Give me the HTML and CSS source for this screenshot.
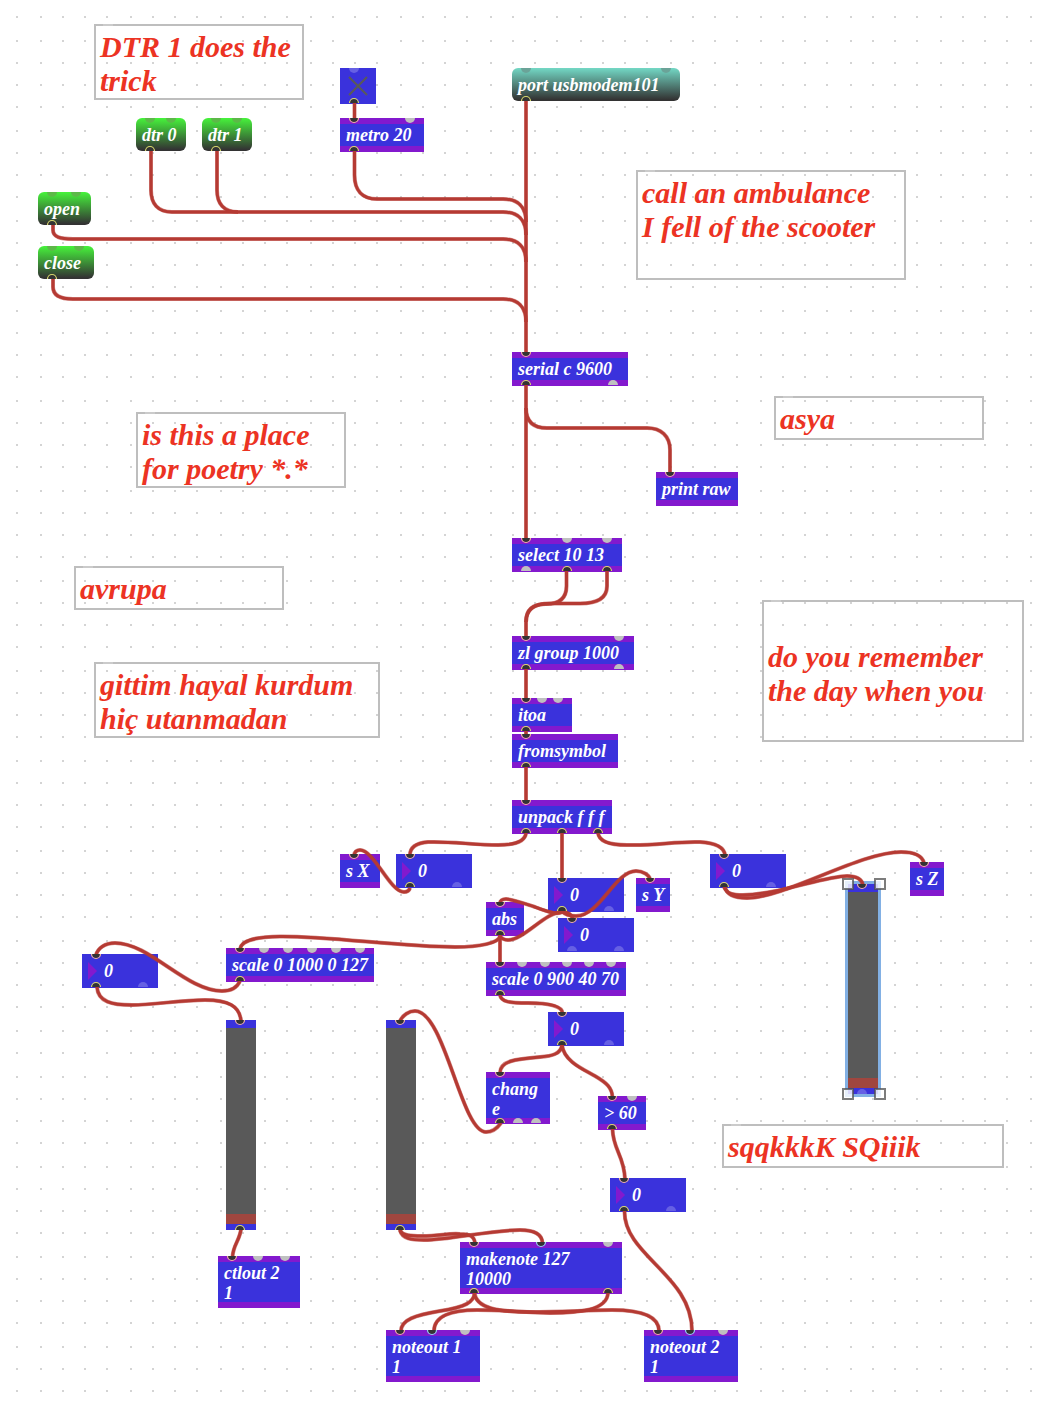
FILE: index.html
```html
<!DOCTYPE html>
<html lang="en">
<head>
<meta charset="utf-8">
<meta name="viewport" content="width=device-width, initial-scale=1">
<title>Serial to MIDI patcher</title>
<link rel="stylesheet" href="styles.css">
</head>
<body>
<main class="patcher">
  <svg class="layer" aria-hidden="true">
    <defs>
      <pattern id="dots" width="90" height="90" patternUnits="userSpaceOnUse" x="16" y="16">
        <path class="dot" d="M0 1h2M24 1h2M46 1h2M68 1h2M0 25h2M24 25h2M46 25h2M68 25h2M0 47h2M24 47h2M46 47h2M68 47h2M0 69h2M24 69h2M46 69h2M68 69h2"/>
      </pattern>
      <pattern id="dots-lower" width="90" height="90" patternUnits="userSpaceOnUse" x="16" y="1052">
        <path class="dot" d="M0 1h2M24 1h2M46 1h2M68 1h2M0 25h2M24 25h2M46 25h2M68 25h2M0 47h2M24 47h2M46 47h2M68 47h2M0 69h2M24 69h2M46 69h2M68 69h2"/>
      </pattern>
    </defs>
    <rect width="100%" height="1050" fill="url(#dots)"/>
    <rect y="1050" width="100%" height="100%" fill="url(#dots-lower)"/>
  </svg>

  <p class="comment at-dtr-note">DTR 1 does the<br>trick</p>
  <p class="comment at-ambulance">call an ambulance<br>I fell of the scooter</p>
  <p class="comment at-asya">asya</p>
  <p class="comment at-poetry">is this a place<br>for poetry *.*</p>
  <p class="comment at-avrupa">avrupa</p>
  <p class="comment at-gittim">gittim hayal kurdum<br>hiç utanmadan</p>
  <p class="comment at-remember"><br>do you remember<br>the day when you</p>
  <p class="comment at-sqq">sqqkkkK SQiiik</p>

  <button class="message at-dtr0" type="button">dtr 0</button>
  <button class="message at-dtr1" type="button">dtr 1</button>
  <button class="message at-open" type="button">open</button>
  <button class="message at-close" type="button">close</button>
  <button class="message port-message at-port" type="button">port usbmodem101</button>

  <input class="toggle at-toggle" type="checkbox" aria-label="Metro on">

  <div class="object at-metro">metro 20</div>
  <div class="object at-serial">serial c 9600</div>
  <div class="object at-print">print raw</div>
  <div class="object at-select">select 10 13</div>
  <div class="object at-zl">zl group 1000</div>
  <div class="object at-itoa">itoa</div>
  <div class="object at-fromsymbol">fromsymbol</div>
  <div class="object at-unpack">unpack f f f</div>
  <div class="object at-send-x">s X</div>
  <div class="object at-send-y">s Y</div>
  <div class="object at-send-z">s Z</div>
  <div class="object at-abs">abs</div>
  <div class="object at-scale-127">scale 0 1000 0 127</div>
  <div class="object at-scale-70">scale 0 900 40 70</div>
  <div class="object at-change">chang<br>e</div>
  <div class="object at-greater">&gt; 60</div>
  <div class="object at-makenote">makenote 127<br>10000</div>
  <div class="object at-noteout1">noteout 1<br>1</div>
  <div class="object at-noteout2">noteout 2<br>1</div>
  <div class="object at-ctlout">ctlout 2<br>1</div>

  <label class="number at-num-x"><input type="number" value="0" aria-label="X value"></label>
  <label class="number at-num-y"><input type="number" value="0" aria-label="Y value"></label>
  <label class="number at-num-abs"><input type="number" value="0" aria-label="Absolute Y"></label>
  <label class="number at-num-z"><input type="number" value="0" aria-label="Z value"></label>
  <label class="number at-num-ctl"><input type="number" value="0" aria-label="Controller value"></label>
  <label class="number at-num-note"><input type="number" value="0" aria-label="Note value"></label>
  <label class="number at-num-gate"><input type="number" value="0" aria-label="Gate value"></label>

  <input class="slider at-slider-ctl" type="range" min="0" max="127" value="0" aria-label="Controller">
  <input class="slider at-slider-note" type="range" min="0" max="127" value="0" aria-label="Note">
  <input class="slider selected at-slider-z" type="range" min="0" max="127" value="0" aria-label="Z level">

  <svg class="layer" aria-hidden="true">
    <defs>
      <path id="in" d="M-5 0A5 5 0 0 0 5 0Z"/>
      <path id="out" d="M-5 0A5 5 0 0 1 5 0Z"/>
      <g id="in-on"><path fill="#333" stroke="none" d="M-4 0A4 4 0 0 0 4 0Z"/><path fill="none" stroke-width="1.2" d="M-4.5 0A4.5 4.5 0 0 0 4.5 0"/></g>
      <g id="out-on"><path fill="#333" stroke="none" d="M-4 0A4 4 0 0 1 4 0Z"/><path fill="none" stroke-width="1.2" d="M-4.5 0A4.5 4.5 0 0 1 4.5 0"/></g>
      <g id="cords">
        <path d="M526 100V353"/>
        <path d="M354.5 103V120"/>
        <path d="M354.5 151V175C354.5 190 362 199 377 199H503C518 199 526 207 526 222"/>
        <path d="M151 151V190C151 204 158 212 172 212H503C518 212 526 220 526 235"/>
        <path d="M217 151V190C217 204 224 212 238 212"/>
        <path d="M53 225V230C53 237 60 239 73 239H503C518 239 526 247 526 262"/>
        <path d="M53 279V287C53 295 60 299 73 299H503C518 299 526 307 526 322"/>
        <path d="M526 385V539"/>
        <path d="M526 408C526 422 534 428 547 428H647C661 428 670 436 670 450V473"/>
        <path d="M566.5 571V586C566.5 598 560 604 546 604C534 604 526 609 526 622V637"/>
        <path d="M607 571V586C607 598 598 603.500 580 603.500H550C534 603.500 526 609 526 622"/>
        <path d="M526 669V699M526 731V735M526 767V801M562 833V879M500 935V963"/>
        <path d="M526 833C525 843 512 845 498 845C474 845 450 841 428 842C416 843 410 847 410 855"/>
        <path d="M598 833C599 842 610 845 627 845C655 846 676 841 700 842C716 843 724 847 725 855"/>
        <path d="M410 888C409 891 407 892 404 892C390 892 374 850 360 850C357 850 355 851 354 855"/>
        <path d="M562 911C560 916 548 912 535 907C520 902 512 899 506 899C502 899 500 901 500 903"/>
        <path d="M562 911C565 915 570 916 576 916C600 916 615 871 636 871C643 871 649 875 650 879"/>
        <path d="M500 936C502 939 505 940 508 940C524 940 545 912 562 912C568 912 572 915 573 919"/>
        <path d="M500 936C499 943 480 947 455 947C400 947 330 936 280 936.500C256 937 241 940 240 949"/>
        <path d="M240 981C237 988 230 991 222 991C186 991 150 943 115 943C105 943 98 948 96 955"/>
        <path d="M97 987C98 1002 112 1005 132 1005C154 1005 180 1000 205 1000C228 1000 240 1006 241 1021"/>
        <path d="M500 995C501 1002 510 1003 528 1003C548 1003 562 1006 562.5 1013"/>
        <path d="M562 1045C561 1054 552 1056 540 1057C515 1059 500 1061 500 1073"/>
        <path d="M562 1045C564 1062 585 1070 595 1076C607 1083 612 1088 612.5 1097"/>
        <path d="M501 1123C496 1130 491 1132 486 1132C461 1132 445 1011 415 1011C409 1011 403 1015 400 1021"/>
        <path d="M612.5 1129C613 1150 624 1155 625 1179"/>
        <path d="M624.5 1211C624 1256 692 1275 692 1331"/>
        <path d="M400 1230C402 1236 412 1236 422 1236C440 1236 448 1233 460 1234C470 1234 474 1236 475 1243"/>
        <path d="M400 1230C402 1239 412 1240 424 1240C450 1240 490 1230 520 1230C534 1230 542 1234 542.5 1243"/>
        <path d="M474.5 1293C474 1302 466 1307 440 1311C415 1315 401 1320 401 1331"/>
        <path d="M474.5 1293C476 1308 498 1312 530 1312C560 1312 590 1310 612 1310C640 1310 659 1316 659 1331"/>
        <path d="M608 1293C607 1310 580 1313 550 1313C520 1312 500 1310 477 1310C452 1310 434 1316 434 1331"/>
        <path d="M241 1229C240 1240 233 1245 232.5 1257"/>
        <path d="M724 887C727 894 733 895 743 895C776 895 825 876 847 876C858 876 862 880 863 885"/>
        <path d="M725 887C727 896 737 898 747 898C785 898 860 852 901 852C914 852 922 855 924 863"/>
      </g>
    </defs>
    <path class="cross" d="M349 77L367 95M367 77L349 95"/>

    <use class="cord-edge" href="#cords"/>
    <use class="cord-core" href="#cords"/>

    <g class="free">
      <use href="#in" x="410" y="118"/><use href="#out" x="613" y="385"/>
      <use href="#in" x="567" y="538"/><use href="#in" x="607" y="538"/><use href="#out" x="526" y="571"/>
      <use href="#in" x="619" y="636"/><use href="#out" x="619" y="669"/>
      <use href="#in" x="542" y="698"/><use href="#in" x="558" y="698"/>
      <use href="#in" x="264" y="948"/><use href="#in" x="288" y="948"/><use href="#in" x="312" y="948"/><use href="#in" x="336" y="948"/><use href="#in" x="360" y="948"/>
      <use href="#in" x="522" y="962"/><use href="#in" x="545" y="962"/><use href="#in" x="567" y="962"/><use href="#in" x="589" y="962"/><use href="#in" x="611" y="962"/>
      <use href="#out" x="518" y="1123"/><use href="#out" x="536" y="1123"/><use href="#in" x="632" y="1096"/>
      <use href="#in" x="608" y="1242"/><use href="#in" x="465" y="1330"/><use href="#in" x="723" y="1330"/>
      <use href="#in" x="258" y="1256"/><use href="#in" x="285" y="1256"/>
    </g>
    <g class="free-pale">
      <use href="#in" x="354" y="68"/>
      <use href="#out" x="457" y="887"/><use href="#out" x="609" y="911"/><use href="#out" x="572" y="951"/><use href="#out" x="619" y="951"/>
      <use href="#out" x="771" y="887"/><use href="#out" x="143" y="987"/><use href="#out" x="609" y="1045"/><use href="#out" x="671" y="1211"/><use href="#out" x="862" y="1094"/>
    </g>
    <g class="free-green">
      <use href="#in" x="150" y="118"/><use href="#in" x="171" y="118"/><use href="#in" x="216" y="118"/><use href="#in" x="237" y="118"/>
      <use href="#in" x="52" y="192"/><use href="#in" x="76" y="192"/><use href="#in" x="52" y="246"/><use href="#in" x="79" y="246"/>
    </g>
    <g class="free-teal"><use href="#in" x="526" y="68"/><use href="#in" x="666" y="68"/></g>
    <g class="inlets">
      <use href="#in-on" x="354" y="118"/><use href="#in-on" x="526" y="352"/><use href="#in-on" x="670" y="472"/><use href="#in-on" x="526" y="538"/>
      <use href="#in-on" x="526" y="636"/><use href="#in-on" x="526" y="698"/><use href="#in-on" x="526" y="734"/><use href="#in-on" x="526" y="800"/>
      <use href="#in-on" x="354" y="854"/><use href="#in-on" x="410" y="854"/><use href="#in-on" x="562" y="878"/><use href="#in-on" x="572" y="918"/>
      <use href="#in-on" x="650" y="878"/><use href="#in-on" x="500" y="902"/><use href="#in-on" x="724" y="854"/><use href="#in-on" x="924" y="862"/>
      <use href="#in-on" x="862" y="884"/><use href="#in-on" x="240" y="948"/><use href="#in-on" x="96" y="954"/><use href="#in-on" x="500" y="962"/>
      <use href="#in-on" x="562" y="1012"/><use href="#in-on" x="240" y="1020"/><use href="#in-on" x="400" y="1020"/><use href="#in-on" x="500" y="1072"/>
      <use href="#in-on" x="612" y="1096"/><use href="#in-on" x="624" y="1178"/><use href="#in-on" x="474" y="1242"/><use href="#in-on" x="400" y="1330"/>
      <use href="#in-on" x="658" y="1330"/><use href="#in-on" x="232" y="1256"/>
    </g>
    <g class="inlets-cold"><use href="#in-on" x="541" y="1242"/><use href="#in-on" x="432" y="1330"/><use href="#in-on" x="690" y="1330"/></g>
    <g class="outlets">
      <use href="#out-on" x="354" y="103"/><use href="#out-on" x="354" y="151"/><use href="#out-on" x="526" y="101"/><use href="#out-on" x="150" y="151"/>
      <use href="#out-on" x="216" y="151"/><use href="#out-on" x="52" y="225"/><use href="#out-on" x="52" y="279"/><use href="#out-on" x="526" y="385"/>
      <use href="#out-on" x="567" y="571"/><use href="#out-on" x="607" y="571"/><use href="#out-on" x="526" y="669"/><use href="#out-on" x="526" y="731"/>
      <use href="#out-on" x="526" y="767"/><use href="#out-on" x="526" y="833"/><use href="#out-on" x="562" y="833"/><use href="#out-on" x="598" y="833"/>
      <use href="#out-on" x="410" y="887"/><use href="#out-on" x="562" y="911"/><use href="#out-on" x="724" y="887"/><use href="#out-on" x="500" y="935"/>
      <use href="#out-on" x="240" y="981"/><use href="#out-on" x="96" y="987"/><use href="#out-on" x="500" y="995"/><use href="#out-on" x="562" y="1045"/>
      <use href="#out-on" x="500" y="1123"/><use href="#out-on" x="612" y="1129"/><use href="#out-on" x="624" y="1211"/><use href="#out-on" x="240" y="1230"/>
      <use href="#out-on" x="400" y="1230"/><use href="#out-on" x="474" y="1293"/><use href="#out-on" x="608" y="1293"/>
    </g>

    <g class="handles">
      <rect x="843" y="879" width="10" height="10"/><rect x="875" y="879" width="10" height="10"/>
      <rect x="843" y="1089" width="10" height="10"/><rect x="875" y="1089" width="10" height="10"/>
    </g>
  </svg>
</main>
</body>
</html>
```
FILE: styles.css
```css
:root {
  --box: #3a32dc;
  --bar: #8319ce;
  --cord: #b53a33;
}

* { box-sizing: border-box; }

body {
  margin: 0;
  background: #fff;
  color: #fff;
  font: italic bold 18px/20px "Liberation Serif", "Times New Roman", serif;
}

.patcher {
  position: relative;
  min-height: 100vh;
}

.layer {
  position: absolute;
  inset: 0;
  width: 100%;
  height: 100%;
  overflow: visible;
  pointer-events: none;
}

.dot { stroke: #d4d4d4; stroke-width: 2; }

/* Free-standing text */
.comment {
  position: absolute;
  margin: 0;
  padding: 4px 4px 0;
  border: 2px solid #bebebe;
  color: #ec3323;
  font-size: 30px;
  line-height: 34px;
  white-space: nowrap;
}

.comment::before {
  content: "";
  position: absolute;
  top: -2px;
  left: 7px;
  width: 10px;
  height: 2px;
  background: #cbcbcb;
}

/* Boxes */
.object {
  position: absolute;
  height: 34px;
  padding: 7px 6px;
  background: var(--box);
  box-shadow: inset 0 6px var(--bar), inset 0 -6px var(--bar);
  white-space: nowrap;
}

.message {
  position: absolute;
  height: 33px;
  padding: 7px 6px 6px;
  border: 0;
  border-radius: 6px;
  background: linear-gradient(#46f33b, #333 96%);
  color: inherit;
  font: inherit;
  text-align: left;
  white-space: nowrap;
}

.port-message { background: linear-gradient(#73d8c5, #333 96%); }

.toggle {
  position: absolute;
  width: 36px;
  height: 36px;
  margin: 0;
  appearance: none;
  background: var(--box);
}

.number {
  position: absolute;
  display: flex;
  align-items: center;
  gap: 3px;
  width: 76px;
  height: 34px;
  padding: 0 6px;
  background: var(--box);
}

.number::before {
  content: "";
  flex: none;
  width: 9px;
  height: 18px;
  background: var(--bar);
  clip-path: polygon(0 0, 100% 50%, 0 100%);
}

/* The field keeps a little room on its left so slanted digits are not clipped */
.number input {
  width: 40px;
  min-width: 0;
  height: 20px;
  margin: 0;
  padding: 0 0 0 4px;
  border: 0;
  background: none;
  color: inherit;
  font: inherit;
  appearance: textfield;
}

.number input::-webkit-inner-spin-button { appearance: none; }

.slider {
  position: absolute;
  width: 30px;
  height: 210px;
  margin: 0;
  appearance: none;
  writing-mode: vertical-lr;
  direction: rtl;
  background:
    linear-gradient(var(--box), var(--box)) top / 100% 8px no-repeat,
    linear-gradient(var(--box), var(--box)) bottom / 100% 6px no-repeat,
    linear-gradient(#a0463f, #a0463f) bottom / 100% 16px no-repeat,
    #595959;
}

.slider::-webkit-slider-thumb {
  appearance: none;
  width: 30px;
  height: 10px;
  background: transparent;
}

.slider.selected { box-shadow: 0 0 0 3px #82b0e4; }

/* Ports, cords and selection */
.cross { stroke: #595959; stroke-width: 2; }
.free { fill: #bfc0c0; }
.free-pale { fill: #6660e4; }
.free-green { fill: #5cb948; }
.free-teal { fill: #6ba398; }
.inlets { stroke: #f2b29c; }
.inlets-cold { stroke: #90d8ea; }
.outlets { stroke: #d9d96e; }
.cord-edge { fill: none; stroke: var(--cord); stroke-opacity: .6; stroke-width: 4; }
.cord-core { fill: none; stroke: var(--cord); stroke-width: 3; }
.handles { fill: rgb(255 255 255 / .8); stroke: rgb(80 80 80 / .75); stroke-width: 2; }

/* Canvas positions */
.at-dtr-note { left: 94px; top: 24px; width: 210px; height: 76px; }
.at-ambulance { left: 636px; top: 170px; width: 270px; height: 110px; }
.at-asya { left: 774px; top: 396px; width: 210px; height: 44px; }
.at-poetry { left: 136px; top: 412px; width: 210px; height: 76px; }
.at-avrupa { left: 74px; top: 566px; width: 210px; height: 44px; }
.at-gittim { left: 94px; top: 662px; width: 286px; height: 76px; }
.at-remember { left: 762px; top: 600px; width: 262px; height: 142px; }
.at-sqq { left: 722px; top: 1124px; width: 282px; height: 44px; }

.at-dtr0 { left: 136px; top: 118px; width: 50px; }
.at-dtr1 { left: 202px; top: 118px; width: 50px; }
.at-open { left: 38px; top: 192px; width: 53px; }
.at-close { left: 38px; top: 246px; width: 56px; }
.at-port { left: 512px; top: 68px; width: 168px; }
.at-toggle { left: 340px; top: 68px; }

.at-metro { left: 340px; top: 118px; width: 84px; }
.at-serial { left: 512px; top: 352px; width: 116px; }
.at-print { left: 656px; top: 472px; width: 82px; }
.at-select { left: 512px; top: 538px; width: 110px; }
.at-zl { left: 512px; top: 636px; width: 122px; }
.at-itoa { left: 512px; top: 698px; width: 60px; }
.at-fromsymbol { left: 512px; top: 734px; width: 106px; }
.at-unpack { left: 512px; top: 800px; width: 100px; }
.at-send-x { left: 340px; top: 854px; width: 40px; }
.at-send-y { left: 636px; top: 878px; width: 34px; }
.at-send-z { left: 910px; top: 862px; width: 34px; }
.at-abs { left: 486px; top: 902px; width: 38px; }
.at-scale-127 { left: 226px; top: 948px; width: 148px; }
.at-scale-70 { left: 486px; top: 962px; width: 140px; }
.at-change { left: 486px; top: 1072px; width: 64px; height: 52px; }
.at-greater { left: 598px; top: 1096px; width: 48px; }
.at-makenote { left: 460px; top: 1242px; width: 162px; height: 52px; }
.at-noteout1 { left: 386px; top: 1330px; width: 94px; height: 52px; }
.at-noteout2 { left: 644px; top: 1330px; width: 94px; height: 52px; }
.at-ctlout { left: 218px; top: 1256px; width: 82px; height: 52px; }

.at-num-x { left: 396px; top: 854px; }
.at-num-y { left: 548px; top: 878px; }
.at-num-abs { left: 558px; top: 918px; }
.at-num-z { left: 710px; top: 854px; }
.at-num-ctl { left: 82px; top: 954px; }
.at-num-note { left: 548px; top: 1012px; }
.at-num-gate { left: 610px; top: 1178px; }

.at-slider-ctl { left: 226px; top: 1020px; }
.at-slider-note { left: 386px; top: 1020px; }
.at-slider-z { left: 848px; top: 884px; }
```
